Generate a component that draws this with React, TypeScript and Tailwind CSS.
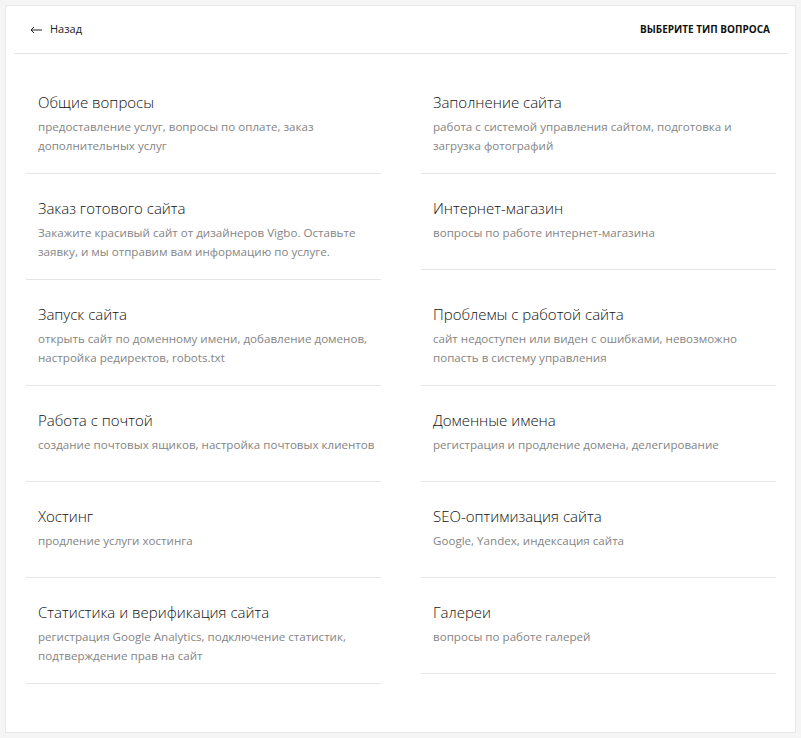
import React from "react";

const items: [string, string][][] = [
  [
    ["Общие вопросы", "предоставление услуг, вопросы по оплате, заказ дополнительных услуг"],
    ["Заполнение сайта", "работа с системой управления сайтом, подготовка и загрузка фотографий"],
  ],
  [
    ["Заказ готового сайта", "Закажите красивый сайт от дизайнеров Vigbo. Оставьте заявку, и мы отправим вам информацию по услуге."],
    ["Интернет-магазин", "вопросы по работе интернет-магазина"],
  ],
  [
    ["Запуск сайта", "открыть сайт по доменному имени, добавление доменов, настройка редиректов, robots.txt"],
    ["Проблемы с работой сайта", "сайт недоступен или виден с ошибками, невозможно попасть в систему управления"],
  ],
  [
    ["Работа с почтой", "создание почтовых ящиков, настройка почтовых клиентов"],
    ["Доменные имена", "регистрация и продление домена, делегирование"],
  ],
  [
    ["Хостинг", "продление услуги хостинга"],
    ["SEO-оптимизация сайта", "Google, Yandex, индексация сайта"],
  ],
  [
    ["Статистика и верификация сайта", "регистрация Google Analytics, подключение статистик, подтверждение прав на сайт"],
    ["Галереи", "вопросы по работе галерей"],
  ],
];

function Item({ title, desc }: { title: string; desc: string }) {
  return (
    <div className="box-border min-h-[96px] border-b border-[#e6e6e6] pt-6 pr-1 pb-[18px] pl-3">
      <div className="text-[15px] leading-[20px] font-light text-[#111]">{title}</div>
      <div className="mt-[5px] text-[11.6px] leading-[19px] text-[#858585]">{desc}</div>
    </div>
  );
}

export default function App() {
  return (
    <div
      className="min-h-[738px] bg-[#f5f5f5] p-[5px]"
      style={{ fontFamily: '"Open Sans", "Liberation Sans", sans-serif' }}
    >
      <div className="box-border h-[728px] border border-[#e8e8e8] bg-white">
        <div className="mx-2 flex h-[48px] items-center justify-between border-b border-[#e3e3e3] pr-[17px] pl-4">
          <div className="flex items-center gap-2 text-[11px] text-[#222]">
            <svg width="12" height="8" viewBox="0 0 12 8" fill="none" stroke="#222" strokeWidth="1">
              <path d="M12 4H1M4 1L1 4l3 3" />
            </svg>
            <span>Назад</span>
          </div>
          <div className="text-[10px] font-bold text-[#111]">ВЫБЕРИТЕ ТИП ВОПРОСА</div>
        </div>
        <div className="grid grid-cols-[355px_355px] gap-x-10 pt-[14px] pl-5">
          {items.map((row, i) => (
            <React.Fragment key={i}>
              <div className="self-start">
                <Item title={row[0][0]} desc={row[0][1]} />
              </div>
              <div className="self-start">
                <Item title={row[1][0]} desc={row[1][1]} />
              </div>
            </React.Fragment>
          ))}
        </div>
      </div>
    </div>
  );
}
